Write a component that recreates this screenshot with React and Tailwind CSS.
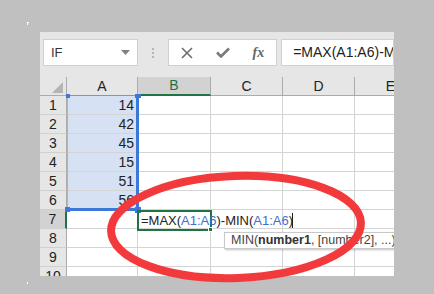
import React from 'react';

const cols = [
  { key: 'A', w: 'w-[71px]' },
  { key: 'B', w: 'w-[73px]' },
  { key: 'C', w: 'w-[72px]' },
  { key: 'D', w: 'w-[72px]' },
  { key: 'E', w: 'w-[72px]' },
];

const values = ['14', '42', '45', '15', '51', '56', '', '', '', ''];

const Toolbar = () => (
  <div className="h-[45px] flex items-start pt-[7px] pl-[3px] bg-[#e6e6e6]">
    {/* name box */}
    <div className="w-[101px] h-[27px] bg-white border border-[#d0d0d0] flex items-center justify-between pl-[7px] pr-[7px]">
      <span className="text-[13px] text-[#333]">IF</span>
      <svg width="9" height="5" viewBox="0 0 9 5"><path d="M0 0 L9 0 L4.5 5 Z" fill="#808080" /></svg>
    </div>
    {/* grip */}
    <div className="w-[32px] h-[27px] flex flex-col items-center justify-center gap-[2px]">
      <span className="w-[2px] h-[2px] bg-[#b4b4b4]" />
      <span className="w-[2px] h-[2px] bg-[#b4b4b4]" />
      <span className="w-[2px] h-[2px] bg-[#b4b4b4]" />
    </div>
    {/* buttons */}
    <div className="w-[109px] h-[27px] bg-white border border-[#d0d0d0] flex items-center">
      <div className="w-[36px] flex justify-center">
        <svg width="12" height="12" viewBox="0 0 12 12"><path d="M1 1 L11 11 M11 1 L1 11" stroke="#6e6e6e" strokeWidth="1.6" /></svg>
      </div>
      <div className="w-[36px] flex justify-center">
        <svg width="14" height="11" viewBox="0 0 14 11"><path d="M1 5.5 L5 9.5 L13 1.5" stroke="#7a7a7a" strokeWidth="2.6" fill="none" /></svg>
      </div>
      <div className="w-[36px] flex justify-center">
        <span className="text-[14px] italic font-bold text-[#666] leading-none" style={{ fontFamily: '"Liberation Serif", serif' }}>fx</span>
      </div>
    </div>
    {/* formula input */}
    <div className="ml-[4px] w-[120px] h-[27px] bg-white border border-[#d0d0d0] flex items-center pl-[11px] overflow-hidden whitespace-nowrap">
      <span className="text-[14px] text-[#222]">=MAX(A1:A6)-MIN(A1:A6)</span>
    </div>
  </div>
);

const HeaderRow = () => (
  <div className="flex h-[19px]">
    <div className="w-[27px] shrink-0 bg-[#e6e6e6] border-r border-b border-[#ababab] relative flex items-end justify-end pr-[3px] pb-[2px]">
      <svg width="11" height="11" viewBox="0 0 11 11"><path d="M11 0 L11 11 L0 11 Z" fill="#b4b4b4" /></svg>
    </div>
    {cols.map(c => (
      <div
        key={c.key}
        className={`${c.w} shrink-0 border-r flex items-center justify-center text-[14px] ${
          c.key === 'B'
            ? 'bg-[#d2d2d2] border-[#ababab] border-b-2 border-b-[#217346] text-[#217346]'
            : 'bg-[#e6e6e6] border-[#ababab] border-b text-[#222]'
        }`}
      >
        {c.key}
      </div>
    ))}
  </div>
);

const Row = ({ n }) => {
  const active = n === 7;
  const inSel = n <= 6;
  return (
    <div className="flex h-[19px]">
      <div
        className={`w-[27px] shrink-0 border-b border-[#d0d0d0] flex items-center justify-center text-[14px] text-[#222] ${
          active ? 'bg-[#d2d2d2] border-r-2 border-r-[#217346]' : 'bg-[#e6e6e6] border-r border-r-[#ababab]'
        }`}
      >
        {n}
      </div>
      {cols.map(c => (
        <div
          key={c.key}
          className={`${c.w} shrink-0 border-r border-b border-[#d4d4d4] flex items-center justify-end pr-[3px] text-[14px] text-[#222] ${
            c.key === 'A' && inSel ? 'bg-[#d6e1f3]' : 'bg-white'
          }`}
        >
          {c.key === 'A' ? values[n - 1] : ''}
        </div>
      ))}
    </div>
  );
};

export default function App() {
  return (
    <div className="w-[434px] h-[294px] bg-[#c0c0c0] relative overflow-hidden" style={{ fontFamily: '"Liberation Sans", Arial, sans-serif' }}>
      <span className="absolute left-[27px] top-[22px] w-[2px] h-[1px] bg-white" />
      <span className="absolute left-[27px] top-[22px] w-[1px] h-[3px] bg-white" />
      <span className="absolute left-[27px] top-[282px] w-[1px] h-[2px] bg-white" />

      <div className="absolute left-[40px] top-[32px] w-[354px] h-[244px] overflow-hidden bg-[#e6e6e6]">
        <Toolbar />
        <div className="relative">
          <HeaderRow />
          {[1, 2, 3, 4, 5, 6, 7, 8, 9, 10].map(n => <Row key={n} n={n} />)}

          {/* range highlight A1:A6 */}
          <div className="absolute left-[27px] top-[18px] w-[72px] h-[116px] border-t border-l border-[#3c78d8]/40 border-r-[3px] border-r-[#3c78d8] border-b-[3px] border-b-[#3c78d8]" />
          <span className="absolute left-[26px] top-[17px] w-[4px] h-[4px] bg-[#3c78d8]" />
          <span className="absolute left-[95px] top-[17px] w-[6px] h-[4px] bg-[#3c78d8]" />
          <span className="absolute left-[25px] top-[130px] w-[5px] h-[5px] bg-[#3c78d8]" />
          <span className="absolute left-[95px] top-[130px] w-[6px] h-[6px] bg-[#3c78d8]" />

          {/* active cell B7 */}
          <div className="absolute left-[97px] top-[133px] w-[75px] h-[21px] border-2 border-[#217346]" />
          <span className="absolute left-[168px] top-[150px] w-[5px] h-[5px] bg-[#217346] border border-white" />
          <div className="absolute left-[101px] top-[134px] h-[19px] flex items-center text-[13px] whitespace-nowrap text-[#222]">
            =MAX(<span className="text-[#3c6fd0]">A1:A6</span>)-MIN(<span className="text-[#3c6fd0]">A1:A6</span>)<span className="w-[1px] h-[15px] bg-[#222] ml-[-1px]" />
          </div>

          {/* function tooltip */}
          <div className="absolute left-[184px] top-[155px] h-[17px] pl-[6px] pr-[20px] bg-white border border-[#c8c8c8] shadow-[1px_1px_2px_rgba(0,0,0,0.25)] flex items-center text-[12.5px] text-[#444] whitespace-nowrap">
            MIN(<b className="text-[#333]">number1</b>, [number2], ...)
          </div>
        </div>
      </div>

      {/* red annotation */}
      <svg className="absolute left-0 top-0 pointer-events-none" width="434" height="294">
        <ellipse cx="236" cy="227" rx="125" ry="51" fill="none" stroke="#f23a3c" strokeWidth="8" transform="rotate(-2 236 227)" />
      </svg>
    </div>
  );
}
